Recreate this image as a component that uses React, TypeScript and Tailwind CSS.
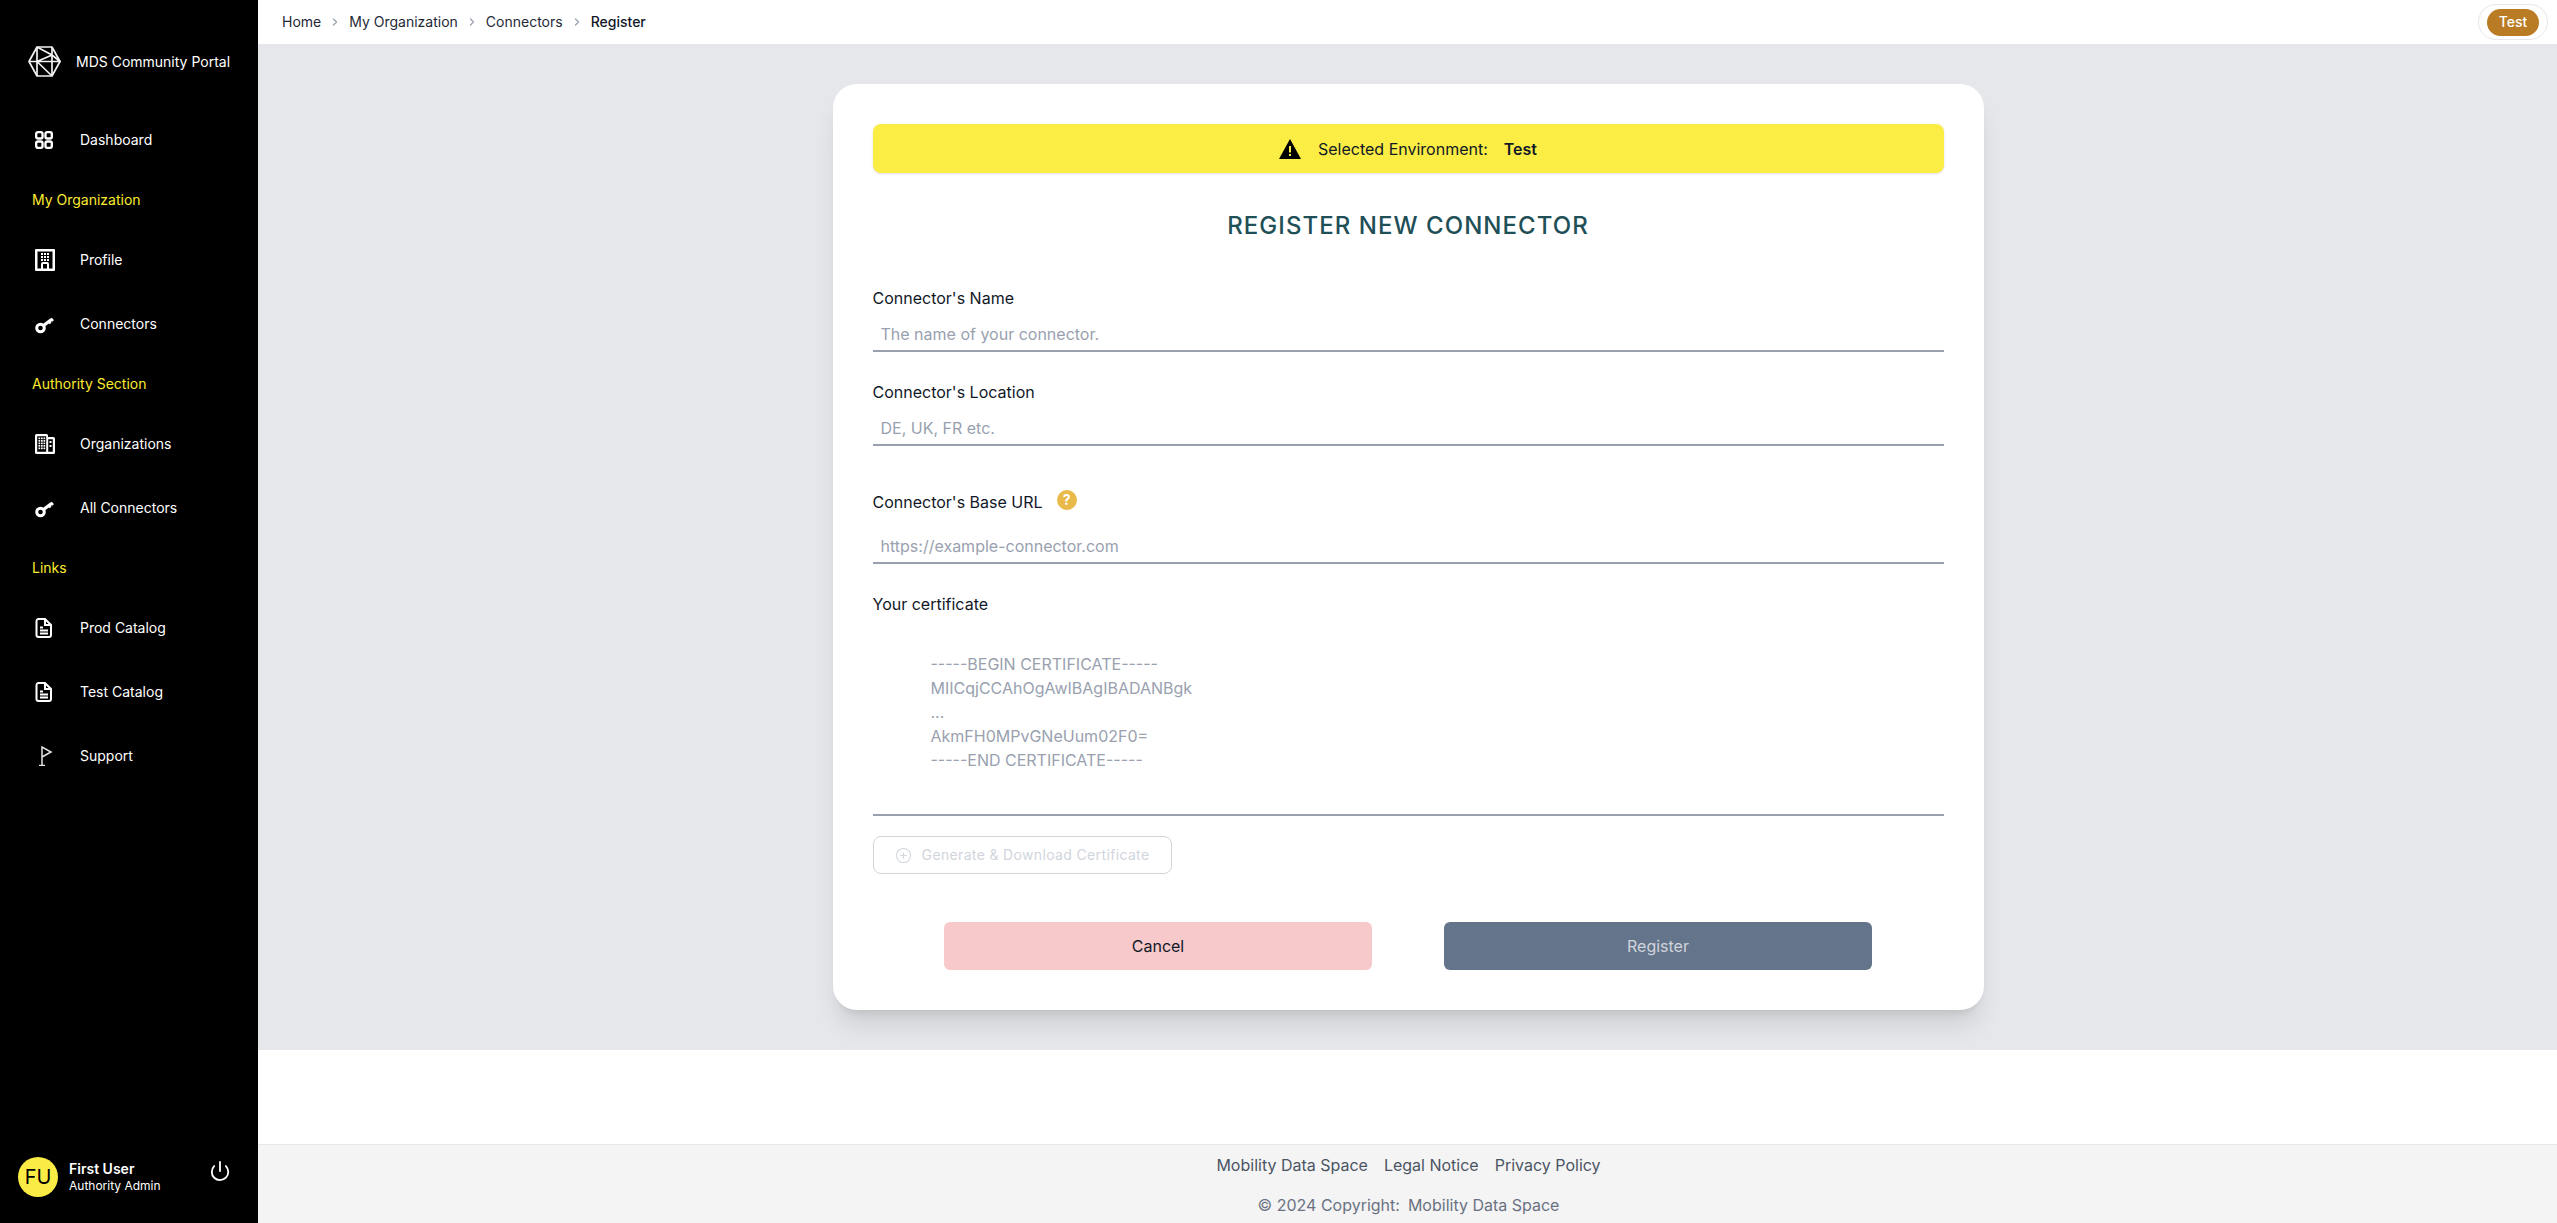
import { ChevronRight, Power, CirclePlus } from "lucide-react";

const font = { fontFamily: "Inter, sans-serif" };

function GridIcon() {
  return (
    <svg width="18" height="18" viewBox="0.800 0.800 18.400 18.400" fill="none" stroke="white" strokeWidth="2.400">
      <rect x="2" y="2" width="6.500" height="6.500" rx="1.800" />
      <rect x="11.500" y="2" width="6.500" height="6.500" rx="1.800" />
      <rect x="2" y="11.500" width="6.500" height="6.500" rx="1.800" />
      <rect x="11.500" y="11.500" width="6.500" height="6.500" rx="1.800" />
    </svg>
  );
}

function BuildingIcon() {
  return (
    <svg width="20" height="22" viewBox="0 0 20 22" fill="white">
      <path fillRule="evenodd" d="M1 0h18a1 1 0 0 1 1 1v20a1 1 0 0 1-1 1H1a1 1 0 0 1-1-1V1a1 1 0 0 1 1-1Zm1.500 2.500v17H6V15a2 2 0 0 1 2-2h4a2 2 0 0 1 2 2v4.500h3.500v-17h-15ZM8 15v4.500h4V15H8Z" />
      {[6, 9, 12].map((x) => [4, 7, 10].map((y) => <rect key={`${x}-${y}`} x={x} y={y} width="2" height="2" />))}
    </svg>
  );
}

function OrgIcon() {
  return (
    <svg width="20" height="20" viewBox="0 0 20 20" fill="white">
      <path fillRule="evenodd" d="M1.500 0h10A1.500 1.500 0 0 1 13 1.500V3h5.500A1.500 1.500 0 0 1 20 4.500v14a1.500 1.500 0 0 1-1.500 1.500h-17A1.500 1.500 0 0 1 0 18.500v-17A1.500 1.500 0 0 1 1.500 0ZM2.200 2.200v15.600h9V2.200h-9Zm11 3v12.600h4.600V5.200h-4.600Z" />
      {[3.500, 6, 8.500].map((x) => [3.500, 6, 8.500, 11, 13.500].map((y) => <rect key={`${x}-${y}`} x={x} y={y} width="1.700" height="1.700" />))}
      <rect x="14.500" y="7" width="2" height="2" />
      <rect x="14.500" y="11" width="2" height="2" />
    </svg>
  );
}

function KeyIcon() {
  return (
    <svg width="19" height="19" viewBox="0 0 19 19" fill="none" stroke="white">
      <circle cx="5.500" cy="13" r="3.800" strokeWidth="3" />
      <path d="M8.500 10.500 16.500 4.500" strokeWidth="3.200" />
      <path d="M13.500 6 15.500 8.500M16 3.500l2 2.500" strokeWidth="2.400" />
    </svg>
  );
}

function DocIcon() {
  return (
    <svg width="18" height="20" viewBox="0 0 18 20" fill="none" stroke="white" strokeWidth="2">
      <path d="M3.500 1H10l6 6v10a2 2 0 0 1-2 2H3.500a2 2 0 0 1-2-2V3a2 2 0 0 1 2-2Z" />
      <path d="M10 1v6h6M5 9.500h3M5 12.500h8M5 15.500h8" />
    </svg>
  );
}

function FlagIcon() {
  return (
    <svg width="18" height="20" viewBox="0 0 18 20" fill="none" stroke="#e5e5e5" strokeWidth="1.500">
      <path d="M7 19.500V1l9 5-9 5" />
      <path d="M4 19.500h6" />
    </svg>
  );
}

function NavItem({ icon, label }: { icon: React.ReactNode; label: string }) {
  return (
    <div className="flex h-16 items-center">
      <span className="flex w-20 pl-[35px]">{icon}</span>
      <span className="text-sm text-white">{label}</span>
    </div>
  );
}

function NavHeading({ label }: { label: string }) {
  return <div className="flex h-14 items-center pl-8 text-sm text-[#fbeb2f]">{label}</div>;
}

const CRUMBS = ["Home", "My Organization", "Connectors"];

const CERT_PLACEHOLDER = `-----BEGIN CERTIFICATE-----
MIICqjCCAhOgAwIBAgIBADANBgk
...
AkmFH0MPvGNeUum02F0=
-----END CERTIFICATE-----`;

export default function App() {
  return (
    <div className="flex h-[1223px] w-full overflow-hidden bg-white text-[#111827]" style={font}>
      <aside className="flex h-full w-[258px] shrink-0 flex-col bg-black">
        <div className="flex h-[108px] items-start pl-7 pt-[46px]">
          <svg width="33" height="31" viewBox="0 0 33 31" fill="none" stroke="#f1f1f1" strokeWidth="1.700" strokeLinejoin="round">
            <path d="M9 1h15l8 14.500L24 30H9L1 15.500 9 1Z" />
            <path d="M9 1v29M9 1l15 8 8 6.500H1M24 1v8M24 9 9 15.500 24 30M24 9v21" />
          </svg>
          <span className="ml-[15px] mt-[6px] text-sm text-white">MDS Community Portal</span>
        </div>
        <NavItem icon={<GridIcon />} label="Dashboard" />
        <NavHeading label="My Organization" />
        <NavItem icon={<BuildingIcon />} label="Profile" />
        <NavItem icon={<KeyIcon />} label="Connectors" />
        <NavHeading label="Authority Section" />
        <NavItem icon={<OrgIcon />} label="Organizations" />
        <NavItem icon={<KeyIcon />} label="All Connectors" />
        <NavHeading label="Links" />
        <NavItem icon={<DocIcon />} label="Prod Catalog" />
        <NavItem icon={<DocIcon />} label="Test Catalog" />
        <NavItem icon={<FlagIcon />} label="Support" />
        <div className="mt-auto flex items-center pb-[26px] pl-[18px]">
          <div className="flex h-10 w-10 items-center justify-center rounded-full bg-[#fbeb45] text-xl text-black">FU</div>
          <div className="ml-[11px] w-[140px]">
            <p className="text-sm leading-[18px] font-semibold text-white">First User</p>
            <p className="text-xs leading-4 text-white">Authority Admin</p>
          </div>
          <Power className="-mt-3 text-white" size={22} strokeWidth={2} />
        </div>
      </aside>

      <div className="flex h-full min-w-0 flex-1 flex-col">
        <header className="flex h-11 shrink-0 items-center justify-between pl-6 pr-[9px]">
          <nav className="flex items-center text-sm text-[#1f2937]">
            {CRUMBS.map((c) => (
              <span key={c} className="flex items-center">
                {c}
                <ChevronRight className="mx-2 text-gray-400" size={12} strokeWidth={2.500} />
              </span>
            ))}
            <span className="font-medium text-[#111827]">Register</span>
          </nav>
          <div className="flex h-[36px] w-[70px] items-center justify-center rounded-full border border-gray-200">
            <span className="flex h-[27px] w-[52px] items-center justify-center rounded-full bg-[#b97c24] text-sm font-medium text-white">Test</span>
          </div>
        </header>

        <main className="flex h-[1006px] shrink-0 justify-center bg-[#e5e7eb] pl-[1px] pt-10">
          <div className="h-[926px] w-[1151px] rounded-3xl bg-white px-10 pt-10 shadow-xl">
            <div className="flex h-[49px] items-center justify-center rounded-lg bg-[#fbed44] shadow-sm">
              <svg width="22" height="20" viewBox="0 0 22 20" className="mr-[17px]">
                <path d="M11 0 22 20H0L11 0Z" fill="black" />
                <rect x="10" y="7" width="2" height="6.500" fill="#fbed44" />
                <rect x="10" y="15" width="2" height="2" fill="#fbed44" />
              </svg>
              <span>Selected Environment:</span>
              <span className="ml-4 font-semibold">Test</span>
            </div>

            <h1 className="mt-[37px] text-center text-2xl font-medium tracking-[1.050px] text-[#1f4f57]">REGISTER NEW CONNECTOR</h1>

            <form className="mt-11">
              <label className="block h-6">Connector's Name</label>
              <input className="mt-1.5 block h-9 w-full border-b-2 border-gray-400 px-2 pt-[2px] outline-none placeholder:text-gray-400" placeholder="The name of your connector." />

              <label className="mt-7 block h-6">Connector's Location</label>
              <input className="mt-1.5 block h-9 w-full border-b-2 border-gray-400 px-2 pt-[2px] outline-none placeholder:text-gray-400" placeholder="DE, UK, FR etc." />

              <div className="mt-11 flex h-6 items-center">
                <label>Connector's Base URL</label>
                <span className="mb-1 ml-3.5 flex h-5 w-5 items-center justify-center rounded-full bg-[#e9b949] text-sm font-bold text-white">?</span>
              </div>
              <input className="mt-3.5 block h-9 w-full border-b-2 border-gray-400 px-2 pt-[2px] outline-none placeholder:text-gray-400" placeholder="https://example-connector.com" />

              <label className="mt-7 block h-6">Your certificate</label>
              <textarea
                className="mt-1.5 block h-[194px] w-full resize-none border-b-2 border-gray-400 pl-[58px] pt-[30px] leading-6 outline-none placeholder:text-gray-400"
                placeholder={CERT_PLACEHOLDER}
              />

              <button type="button" disabled className="mt-5 flex h-[38px] w-[299px] items-center justify-center gap-2.5 rounded-lg border border-gray-300 text-sm tracking-wide text-gray-300">
                <CirclePlus size={17} strokeWidth={1.500} />
                Generate &amp; Download Certificate
              </button>

              <div className="mt-12 flex justify-center gap-[72px]">
                <button type="button" className="h-12 w-[428px] rounded-md bg-[#f8c9cb]">Cancel</button>
                <button type="button" disabled className="h-12 w-[428px] rounded-md bg-[#64748b] text-gray-300">Register</button>
              </div>
            </form>
          </div>
        </main>

        <div className="flex-1" />

        <footer className="flex h-[79px] shrink-0 flex-col items-center border-t border-[#e5e7eb] bg-[#f4f4f5] pl-[2px] pt-[8px]">
          <div className="flex h-6 items-center gap-4 text-[#4b5563]">
            <span>Mobility Data Space</span>
            <span>Legal Notice</span>
            <span>Privacy Policy</span>
          </div>
          <p className="mt-4 flex h-6 items-center gap-2 text-gray-500">
            <span>© 2024 Copyright:</span>
            <span>Mobility Data Space</span>
          </p>
        </footer>
      </div>
    </div>
  );
}
